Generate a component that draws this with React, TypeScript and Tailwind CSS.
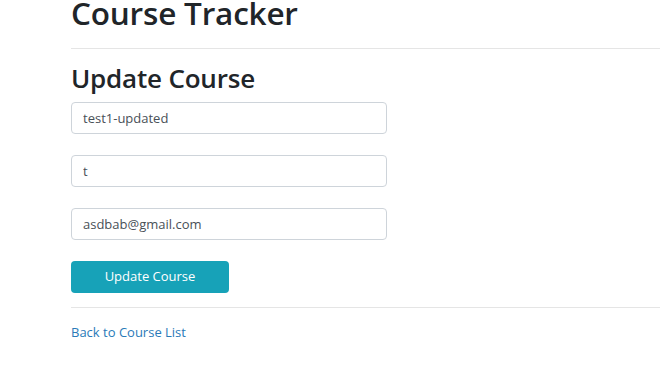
export default function App() {
  return (
    <div className="min-h-screen bg-white font-['Open_Sans',sans-serif] text-[#212529] overflow-hidden">
      <div className="pl-[71px] -mt-[6px]">
        <h1 className="text-[31.5px] leading-[1.2] font-semibold tracking-[-0.2px]">Course Tracker</h1>
        <hr className="mt-[16px] border-t border-[#e5e5e5]" />
        <h2 className="mt-[14px] text-[26px] leading-[1.2] font-semibold tracking-[-0.2px]">Update Course</h2>
        <form className="mt-[8px] flex flex-col gap-[21px]">
          <input
            className="w-[316px] h-[32px] px-[11px] border border-[#ced4da] rounded-[4px] text-[13px] text-[#495057] outline-none"
            defaultValue="test1-updated"
          />
          <input
            className="w-[316px] h-[32px] px-[11px] border border-[#ced4da] rounded-[4px] text-[13px] text-[#495057] outline-none"
            defaultValue="t"
          />
          <input
            className="w-[316px] h-[32px] px-[11px] border border-[#ced4da] rounded-[4px] text-[13px] text-[#495057] outline-none"
            defaultValue="asdbab@gmail.com"
          />
          <button
            type="button"
            className="w-[158px] h-[32px] bg-[#17a2b8] text-white text-[13px] rounded-[4px]"
          >
            Update Course
          </button>
        </form>
        <hr className="mt-[14px] border-t border-[#e5e5e5]" />
        <a href="#" className="block mt-[15px] text-[13px] text-[#2a7ab8]">
          Back to Course List
        </a>
      </div>
    </div>
  );
}
